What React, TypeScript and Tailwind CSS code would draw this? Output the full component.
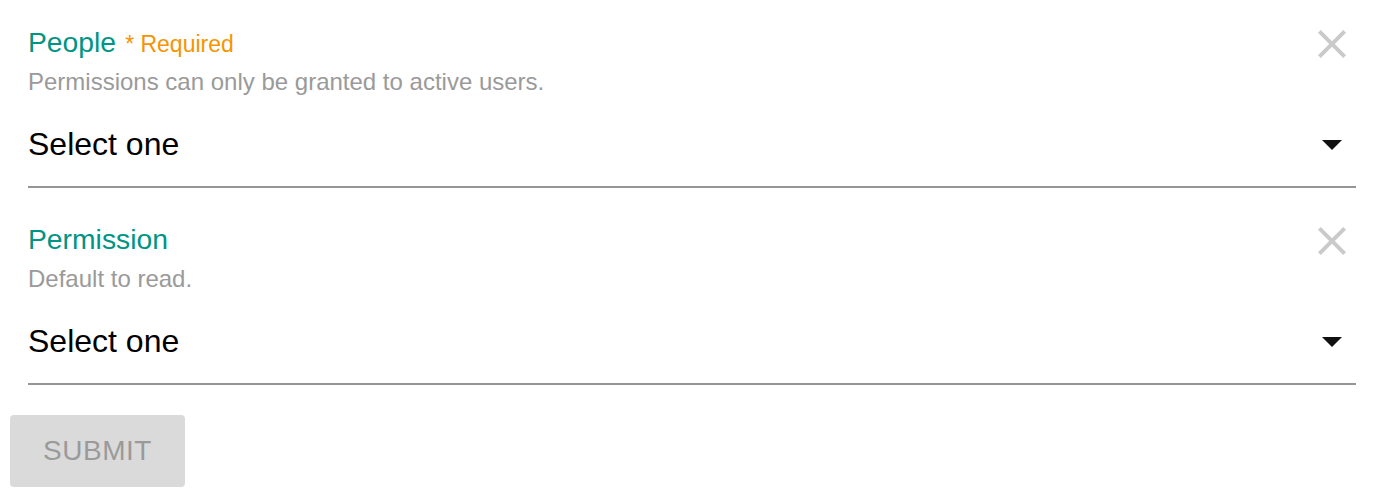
import React from "react";

interface FieldProps {
  label: string;
  required?: boolean;
  helper: string;
  className?: string;
}

const ClearIcon = () => (
  <svg width="48" height="48" viewBox="0 0 24 24" className="fill-[#cacaca]">
    <path d="M19 6.41L17.59 5 12 10.59 6.41 5 5 6.41 10.59 12 5 17.59 6.41 19 12 13.41 17.59 19 19 17.59 13.41 12z" />
  </svg>
);

const ArrowIcon = () => (
  <svg width="48" height="48" viewBox="0 0 24 24" className="fill-[#111]">
    <path d="M7 10l5 5 5-5z" />
  </svg>
);

const SelectField: React.FC<FieldProps> = ({ label, required, helper, className }) => {
  return (
    <div className={`relative ${className ?? ""}`}>
      {/* clear button */}
      <button className="absolute right-0 top-[-8px]">
        <ClearIcon />
      </button>

      <div className="flex h-[28px] items-baseline gap-[9px] leading-[28px]">
        <span className="text-[28.3px] text-[#009484]">{label}</span>
        {required && <span className="text-[23px] text-[#f69400]">* Required</span>}
      </div>
      <div className="mt-[14px] text-[24px] leading-[24px] text-[#9a9a9a]">{helper}</div>

      <div className="mt-[34px] flex items-center justify-between border-b-2 border-[#959595] pb-[26px]">
        <span className="text-[32px] leading-[32px] text-black">Select one</span>
        <span className="-my-2">
          <ArrowIcon />
        </span>
      </div>
    </div>
  );
};

export default function App() {
  return (
    <div className="w-[1382px] h-[496px] bg-white font-['Liberation_Sans',Arial,sans-serif]">
      <div className="pl-[28px] pr-[26px] pt-[28px]">
        <SelectField
          label="People"
          required
          helper="Permissions can only be granted to active users."
        />
        <SelectField label="Permission" helper="Default to read." className="mt-[37px]" />
      </div>

      <div className="pl-[10px] pt-[30px]">
        <button
          disabled
          className="h-[72px] w-[175px] rounded-[4px] bg-[#dadada] text-[28px] tracking-[0.5px] text-[#9a9a9a]"
        >
          SUBMIT
        </button>
      </div>
    </div>
  );
}
